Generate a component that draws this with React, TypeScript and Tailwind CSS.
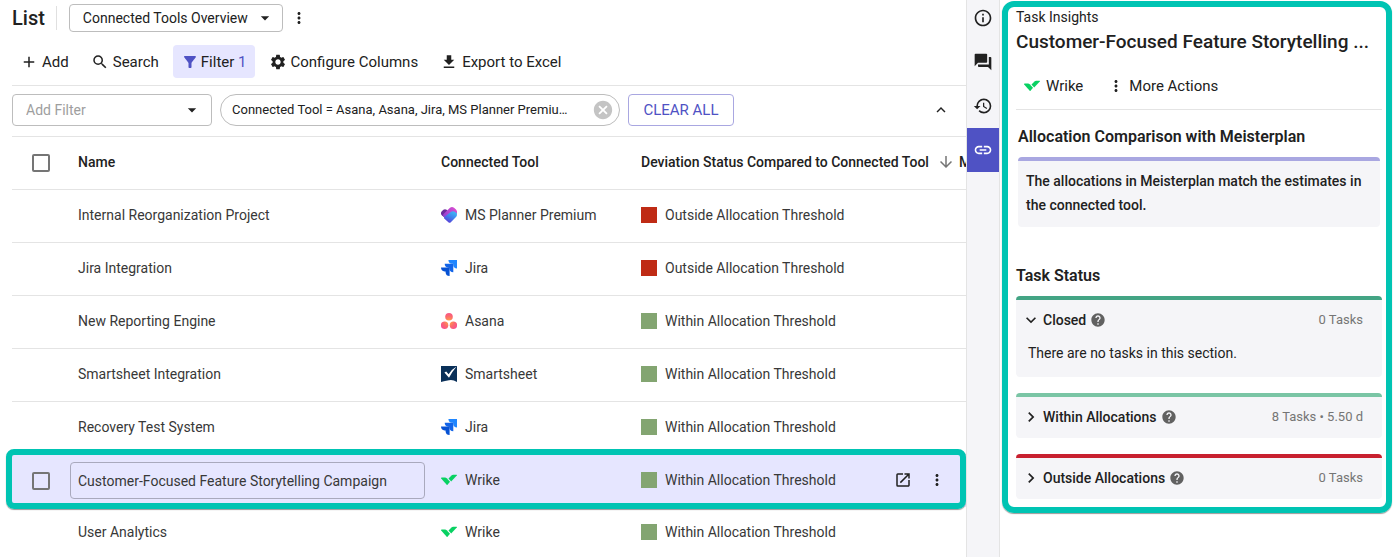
import React, { useState } from 'react';
import clsx from 'clsx';
import {
  MdAdd,
  MdArrowDownward,
  MdArrowDropDown,
  MdCancel,
  MdChevronRight,
  MdExpandLess,
  MdExpandMore,
  MdFileDownload,
  MdFilterAlt,
  MdForum,
  MdHelp,
  MdHistory,
  MdInfoOutline,
  MdLink,
  MdMoreVert,
  MdOpenInNew,
  MdSearch,
  MdSettings,
} from 'react-icons/md';

type Tool = 'MS Planner Premium' | 'Jira' | 'Asana' | 'Smartsheet' | 'Wrike';

interface Row {
  name: string;
  tool: Tool;
  within: boolean;
  selected?: boolean;
}

const rows: Row[] = [
  { name: 'Internal Reorganization Project', tool: 'MS Planner Premium', within: false },
  { name: 'Jira Integration', tool: 'Jira', within: false },
  { name: 'New Reporting Engine', tool: 'Asana', within: true },
  { name: 'Smartsheet Integration', tool: 'Smartsheet', within: true },
  { name: 'Recovery Test System', tool: 'Jira', within: true },
  { name: 'Customer-Focused Feature Storytelling Campaign', tool: 'Wrike', within: true, selected: true },
  { name: 'User Analytics', tool: 'Wrike', within: true },
];

const PlannerLogo = () => (
  <svg viewBox="0 0 16 16" className="w-4 h-4 shrink-0">
    <defs>
      <linearGradient id="plannerTop" x1="0" y1="0.6" x2="1" y2="0.2">
        <stop offset="0" stopColor="#9a3fd1" />
        <stop offset="1" stopColor="#dc4fd0" />
      </linearGradient>
      <linearGradient id="plannerBottom" x1="0.9" y1="0" x2="0.3" y2="1">
        <stop offset="0" stopColor="#3fc0f5" />
        <stop offset="0.5" stopColor="#3f86ee" />
        <stop offset="1" stopColor="#5b3bd6" />
      </linearGradient>
    </defs>
    <path d="M.8 4.200 2.400 2.800Q4 1.600 5.600 2.800L9 6.400 4.600 11.600 1 8.600Q-1 6.200.8 4.200Z" fill="#6b2a9c" />
    <path d="M4.200 11 2 8.600Q1.800 7.600 3 6.400L9 .8Q11 -.8 13 .8L15 2.600Q16.600 4.400 15.800 7L12 6Z" fill="url(#plannerTop)" />
    <path d="M3.600 9.800 9.800 5Q11.600 3.800 13.200 4.600L15.600 6Q16.600 8.200 15 10L9.800 15.200Q8.600 16.400 7.400 15.200L3.200 11.600Q2.600 10.800 3.600 9.800Z" fill="url(#plannerBottom)" />
  </svg>
);

const JiraLogo = () => (
  <svg viewBox="0 0 16 16" className="w-4 h-4 shrink-0">
    <path d="M7.400 0H16V8.600A4 4 0 0 1 12.200 5V3.800H11A4 4 0 0 1 7.400 0Z" fill="#1f86ff" />
    <path d="M3.700 3.700H12.300V12.300A4 4 0 0 1 8.300 8.600V7.700H7.300A4 4 0 0 1 3.700 3.700Z" fill="#1264e8" />
    <path d="M0 7.400H8.600V16A4 4 0 0 1 4.600 12.400V11.400H3.600A4 4 0 0 1 0 7.400Z" fill="#0652d4" />
  </svg>
);

const AsanaLogo = () => (
  <svg viewBox="0 0 16 16" className="w-4 h-4 shrink-0">
    <defs>
      <radialGradient id="asana" gradientUnits="userSpaceOnUse" cx="8" cy="8.500" r="9">
        <stop offset="0.100" stopColor="#ffa04a" />
        <stop offset="0.600" stopColor="#fb6a6c" />
        <stop offset="1" stopColor="#f9538d" />
      </radialGradient>
    </defs>
    <g fill="url(#asana)">
      <circle cx="8" cy="3.800" r="3.800" />
      <circle cx="3.600" cy="12.200" r="3.700" />
      <circle cx="12.400" cy="12.200" r="3.700" />
    </g>
  </svg>
);

const SmartsheetLogo = () => (
  <svg viewBox="0 0 16 16" className="w-4 h-4 shrink-0">
    <path d="M0 0H16V16Q12 13.400 8 14.200 4 14.600 0 16Z" fill="#0a3059" />
    <path d="M3.400 6.600 5.200 5.600 7.600 8.200Q10.400 3.600 15.600.6 11.600 5.200 8 11.800Z" fill="#fff" />
  </svg>
);

const WrikeLogo = () => (
  <svg viewBox="0 0 16 16" className="w-4 h-4 shrink-0">
    <path d="M.6 5.600H4Q5 5.600 5.700 6.300L9 9.700 6.500 12.700Q6.100 13.100 5.700 12.700L.2 6.400Q0 5.600.6 5.600Z" fill="#08d162" />
    <path d="M15.600 2.800H12.200Q11.200 2.800 10.500 3.500L7.500 6.600 10.200 9.500 15.800 3.600Q16.200 2.800 15.600 2.800Z" fill="#08d162" />
  </svg>
);

const logos: Record<Tool, React.FC> = {
  'MS Planner Premium': PlannerLogo,
  Jira: JiraLogo,
  Asana: AsanaLogo,
  Smartsheet: SmartsheetLogo,
  Wrike: WrikeLogo,
};

const ToolbarButton = ({ icon, active, children }: { icon: React.ReactNode; active?: boolean; children: React.ReactNode }) => (
  <button
    className={clsx(
      'flex items-center h-[33px] px-2 rounded whitespace-nowrap text-[15px]',
      active ? 'gap-0.5 bg-[#e6e6ff]' : 'gap-1'
    )}
  >
    {icon}
    <span>{children}</span>
  </button>
);

const Checkbox = ({ label }: { label: string }) => (
  <input
    type="checkbox"
    aria-label={label}
    className="block appearance-none w-[18px] h-[18px] ml-5 border-2 border-[#757575] rounded-[2px] checked:bg-[#4f52c4]"
  />
);

const TaskRow = ({ row }: { row: Row }) => {
  const Logo = logos[row.tool];
  return (
    <tr className={clsx('h-[53px]', row.selected ? 'relative bg-[#e6e6ff]' : 'border-b border-[#e4e4e4]')}>
      <td>
        {row.selected && (
          <>
            <Checkbox label={`Select ${row.name}`} />
            {/* highlight frame around the active row */}
            <div className="absolute -top-[5px] -bottom-0.5 -left-1.5 right-0 border-6 border-[#00c4b3] rounded-lg shadow-[0_1px_1px_rgba(0,0,0,0.4)] pointer-events-none"></div>
          </>
        )}
      </td>
      <td className={row.selected ? 'pr-2' : 'px-2 pb-0.5'}>
        {row.selected ? (
          <input
            type="text"
            aria-label="Name"
            defaultValue={row.name}
            className="block w-full h-[37px] px-[7px] border border-[#a9a9bd] rounded text-ellipsis"
          />
        ) : (
          row.name
        )}
      </td>
      <td className="px-2 pb-0.5">
        <div className="flex items-center gap-2">
          <Logo />
          {row.tool}
        </div>
      </td>
      <td className="px-2 pb-0.5" colSpan={2}>
        <div className="flex items-center gap-2">
          <span className={clsx('w-4 h-4 shrink-0', row.within ? 'bg-[#83a571]' : 'bg-[#bf2b15]')}></span>
          {row.within ? 'Within Allocation Threshold' : 'Outside Allocation Threshold'}
          {row.selected && (
            <div className="flex items-center gap-4 ml-auto pr-3 text-[#212121]">
              <button aria-label="Open">
                <MdOpenInNew className="w-[18px] h-[18px]" />
              </button>
              <button aria-label="Row actions">
                <MdMoreVert className="w-[18px] h-[18px]" />
              </button>
            </div>
          )}
        </div>
      </td>
    </tr>
  );
};

const StatusSection = ({
  title,
  count,
  color,
  defaultOpen = false,
}: {
  title: string;
  count: string;
  color: string;
  defaultOpen?: boolean;
}) => {
  const [open, setOpen] = useState(defaultOpen);
  const Chevron = open ? MdExpandMore : MdChevronRight;
  return (
    <section className={clsx('border-t-4 rounded bg-[#f5f5f8]', color)}>
      <div className="flex items-center h-[41px] pb-px pl-[5px] pr-[19px]">
        <button className="flex items-center gap-0.5 text-sm font-medium" aria-expanded={open} onClick={() => setOpen(!open)}>
          <Chevron className="w-5 h-5" />
          {title}
        </button>
        <MdHelp className="w-4 h-4 ml-1 text-[#616161]" />
        <span className="ml-auto text-[13px] text-[#757575]">{count}</span>
      </div>
      {open && <p className="px-3 pt-px pb-[13px] text-sm leading-[22px]">There are no tasks in this section.</p>}
    </section>
  );
};

export default function App() {
  return (
    <div className="flex min-h-screen bg-white text-[#212121] text-[15px] leading-5 font-[Roboto,sans-serif]">
      <main className="flex-1 min-w-0 pl-3 overflow-hidden">
        <div className="flex items-center h-9">
          <h1 className="text-xl font-medium pr-[11px]">List</h1>
          <div className="w-px h-6 bg-[#e0e0e0]"></div>
          <div className="relative ml-3">
            <select
              aria-label="View"
              className="block appearance-none w-[214px] h-7 pl-[13px] pr-8 border border-[#bdbdbd] rounded text-sm"
            >
              <option>Connected Tools Overview</option>
            </select>
            <MdArrowDropDown className="absolute right-2 top-1 w-5 h-5 pointer-events-none" />
          </div>
          <button aria-label="View actions" className="ml-[7px]">
            <MdMoreVert className="w-[18px] h-[18px]" />
          </button>
        </div>

        <div className="flex items-center gap-1.5 h-[50px] pt-0.5 border-b border-[#e4e4e4]">
          <ToolbarButton icon={<MdAdd className="w-[18px] h-[18px]" />}>Add</ToolbarButton>
          <ToolbarButton icon={<MdSearch className="w-[18px] h-[18px]" />}>Search</ToolbarButton>
          <ToolbarButton active icon={<MdFilterAlt className="w-[18px] h-[18px] text-[#4f52c4]" />}>
            Filter <span className="text-[#4f52c4]">1</span>
          </ToolbarButton>
          <ToolbarButton icon={<MdSettings className="w-[18px] h-[18px]" />}>Configure Columns</ToolbarButton>
          <ToolbarButton icon={<MdFileDownload className="w-[18px] h-[18px]" />}>Export to Excel</ToolbarButton>
        </div>

        <div className="flex items-center gap-2 h-[51px] pb-0.5 border-b border-[#e4e4e4]">
          <div className="relative">
            <select
              aria-label="Add Filter"
              className="block appearance-none w-[200px] h-8 pl-[13px] pr-8 border border-[#bdbdbd] rounded text-sm text-[#9e9e9e]"
            >
              <option>Add Filter</option>
            </select>
            <MdArrowDropDown className="absolute right-2.5 top-1.5 w-5 h-5 pointer-events-none" />
          </div>
          <div className="flex items-center w-[400px] h-8 pl-[11px] pr-[5px] border border-[#bdbdbd] rounded-full">
            <span className="flex-1 text-[13px] whitespace-nowrap">Connected Tool = Asana, Asana, Jira, MS Planner Premiu…</span>
            <button aria-label="Remove filter" className="ml-2">
              <MdCancel className="w-[22px] h-[22px] text-[#c4c4c4]" />
            </button>
          </div>
          <button className="w-[106px] h-8 border border-[#a9a7e1] rounded text-[#4f52c4]">CLEAR ALL</button>
          <button aria-label="Collapse filters" className="ml-auto mr-4">
            <MdExpandLess className="w-[18px] h-[18px]" />
          </button>
        </div>

        <table className="w-full table-fixed text-left text-sm text-[#383838] whitespace-nowrap">
          <colgroup>
            <col className="w-[58px]" />
            <col />
            <col className="w-[200px]" />
            <col className="w-[318px]" />
            <col className="w-[15px]" />
          </colgroup>
          <thead>
            <tr className="h-[52px] border-b border-[#e4e4e4] text-[#212121]">
              <th>
                <Checkbox label="Select all" />
              </th>
              <th className="px-2 pb-0.5 font-medium">Name</th>
              <th className="px-2 pb-0.5 font-medium">Connected Tool</th>
              <th className="pl-2 pb-0.5 font-medium">
                <div className="flex items-center gap-2">
                  Deviation Status Compared to Connected Tool
                  <MdArrowDownward className="w-[18px] h-[18px] shrink-0 text-[#757575]" />
                </div>
              </th>
              <th className="pl-2 pb-0.5 font-medium">M</th>
            </tr>
          </thead>
          <tbody>
            {rows.map((row) => (
              <TaskRow key={row.name} row={row} />
            ))}
          </tbody>
        </table>
      </main>

      <nav className="w-[34px] shrink-0 border-x border-[#e4e4e4] bg-[#f5f5f8]">
        <button aria-label="Details" className="flex items-center justify-center w-full h-10 pb-1">
          <MdInfoOutline className="w-5 h-5" />
        </button>
        <button aria-label="Comments" className="flex items-center justify-center w-full h-11">
          <MdForum className="w-5 h-5" />
        </button>
        <button aria-label="History" className="flex items-center justify-center w-full h-11">
          <MdHistory className="w-5 h-5" />
        </button>
        <button aria-label="Connected tool" className="flex items-center justify-center w-full h-11 bg-[#4f52c4] text-white">
          <MdLink className="w-5 h-5" />
        </button>
      </nav>

      <aside className="w-[394px] shrink-0 pt-px px-0.5">
        <div className="border-6 border-[#00c4b3] rounded-xl pl-2 pr-1 pb-2 shadow-[0_1px_1px_rgba(0,0,0,0.4)]">
          <p className="text-sm">Task Insights</p>
          <h2 className="mt-1 text-[19px] leading-[22px] font-medium whitespace-nowrap">Customer-Focused Feature Storytelling ...</h2>

          <div className="flex items-center gap-6 h-[57px] pt-2.5 pl-2 border-b border-[#e4e4e4]">
            <button className="flex items-center gap-1.5">
              <WrikeLogo />
              Wrike
            </button>
            <button className="flex items-center gap-1">
              <MdMoreVert className="w-[18px] h-[18px]" />
              More Actions
            </button>
          </div>

          <div className="px-0.5">
            <h3 className="mt-[17px] text-base leading-5 font-semibold">Allocation Comparison with Meisterplan</h3>
            <p className="mt-2.5 px-2 pt-2 pb-2.5 border-t-4 border-[#a9a7e1] rounded bg-[#f5f5f8] text-sm leading-6 font-medium">
              The allocations in Meisterplan match the estimates in the connected tool.
            </p>
          </div>

          <h3 className="mt-[39px] mb-2.5 text-base leading-5 font-semibold">Task Status</h3>
          <div className="flex flex-col gap-4">
            <StatusSection title="Closed" count="0 Tasks" color="border-[#43a484]" defaultOpen />
            <StatusSection title="Within Allocations" count="8 Tasks • 5.50 d" color="border-[#7ac5a5]" />
            <StatusSection title="Outside Allocations" count="0 Tasks" color="border-[#c8202f]" />
          </div>
        </div>
      </aside>
    </div>
  );
}
